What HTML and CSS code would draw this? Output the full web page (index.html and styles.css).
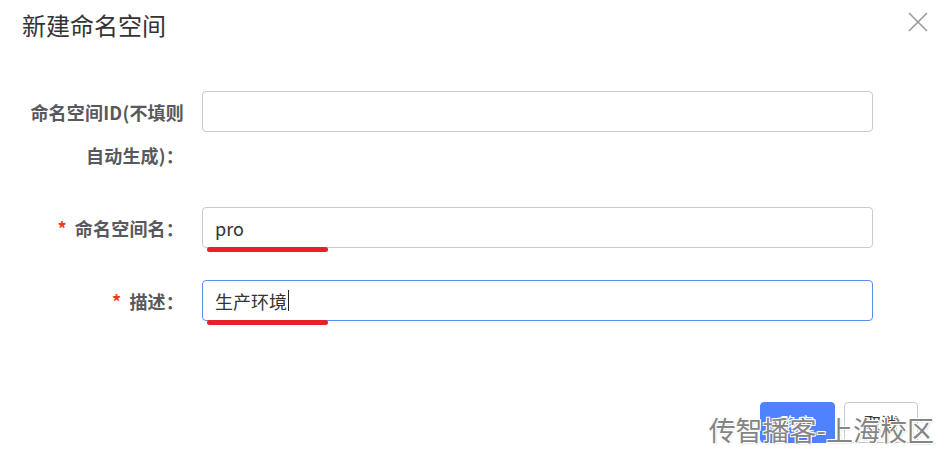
FILE: index.html
```html
<!DOCTYPE html>
<html lang="zh-CN">
<head>
<meta charset="utf-8">
<title>新建命名空间</title>
<link rel="stylesheet" href="styles.css">
</head>
<body>
<div class="dialog">
  <div class="header">
    <span class="title">新建命名空间</span>
    <span class="close">
      <svg width="20" height="20" viewBox="0 0 20 20"><path d="M1 1L19 19M19 1L1 19" stroke="#9a9a9a" stroke-width="1.6" fill="none"/></svg>
    </span>
  </div>
  <div class="form">
    <div class="row row-id">
      <label class="label">命名空间ID(不填则自动生成)：</label>
      <div class="input"></div>
    </div>
    <div class="row row-name">
      <label class="label"><span class="req">*</span>命名空间名：</label>
      <div class="input"><span class="val">pro</span><span class="mark"></span></div>
    </div>
    <div class="row row-desc">
      <label class="label"><span class="req">*</span>描述：</label>
      <div class="input focus"><span class="val">生产环境</span><span class="caret"></span><span class="mark"></span></div>
    </div>
  </div>
  <div class="footer">
    <button class="btn primary">确定</button>
    <button class="btn">取消</button>
  </div>
  <div class="watermark">传智播客-上海校区</div>
</div>
</body>
</html>
```
FILE: styles.css
```css
html, body {
  margin: 0;
  padding: 0;
  background: #fff;
}
body {
  width: 944px;
  height: 452px;
  overflow: hidden;
  font-family: "Noto Sans CJK SC", "Noto Sans", sans-serif;
}
.dialog {
  position: relative;
  width: 944px;
  height: 452px;
}
.header {
  display: flex;
  justify-content: space-between;
  align-items: flex-start;
  padding: 9px 16px 0 22px;
  height: 40px;
}
.title {
  font-size: 24px;
  line-height: 32px;
  color: #333;
}
.close {
  display: block;
  margin-top: 3px;
  width: 20px;
  height: 20px;
}
.close svg { display: block; }
.form {
  margin-top: 42px;
  display: flex;
  flex-direction: column;
}
.row {
  display: grid;
  grid-template-columns: 184px 671px;
  column-gap: 18px;
  align-items: start;
}
.row-name { margin-top: 30px; }
.row-desc { margin-top: 30px; }
.label {
  font-size: 18px;
  font-weight: 700;
  color: #58595d;
  line-height: 43px;
  text-align: right;
  padding-left: 20px;
  letter-spacing: 0.2px;
}
.req {
  color: #f23a12;
  margin-right: 8px;
  font-weight: 700;
}
.input {
  position: relative;
  box-sizing: border-box;
  height: 41px;
  border: 1px solid #c9cace;
  border-radius: 4px;
  padding: 0 12px;
  display: flex;
  align-items: center;
  font-size: 18px;
  color: #333;
}
.input.focus {
  border-color: #5b8cf0;
}
.val {
  line-height: 24px;
}
.caret {
  display: inline-block;
  width: 1px;
  height: 21px;
  background: #222;
  margin-left: 1px;
}
.mark {
  position: absolute;
  left: 4px;
  top: 39px;
  width: 121px;
  height: 5px;
  border-radius: 3px;
  background: #e8202a;
}
.footer {
  display: flex;
  justify-content: flex-end;
  gap: 9px;
  padding-right: 26px;
  margin-top: 79px;
}
.btn {
  box-sizing: border-box;
  width: 74px;
  height: 41px;
  border-radius: 4px;
  font-family: "Noto Sans CJK SC", sans-serif;
  font-size: 17px;
  border: 1px solid #c9cace;
  background: #fff;
  color: #333;
  padding: 0;
}
.btn.primary {
  background: #4f82ff;
  border-color: #4f82ff;
  color: #fff;
  width: 75px;
}
.watermark {
  position: absolute;
  right: 10px;
  bottom: 4px;
  font-size: 27px;
  line-height: 36px;
  color: #858585;
  text-shadow: 1px 1px 0 #fff, -1px -1px 0 #fff, 1px -1px 0 #fff, -1px 1px 0 #fff, 1px 1px 2px rgba(0,0,0,0.25);
}
```
